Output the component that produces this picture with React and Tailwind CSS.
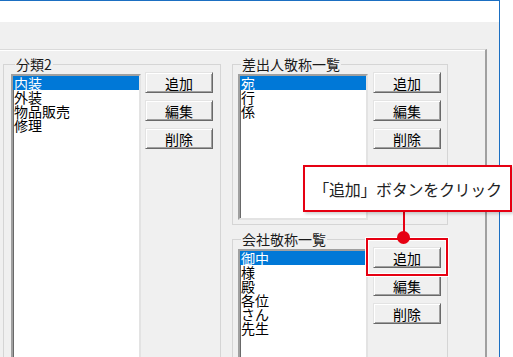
const font = { fontFamily: '"Noto Sans CJK JP", "Noto Sans", sans-serif' };

function Btn({ label }) {
  return (
    <div className="w-[68px] h-[21px] flex items-center justify-center bg-[#f0f0f0] border border-t-[#e3e3e3] border-l-[#e3e3e3] border-r-[#696969] border-b-[#696969] shadow-[inset_1px_1px_0_#fff,inset_-1px_-1px_0_#a0a0a0] text-[14px] leading-none text-black">
      {label}
    </div>
  );
}

function ListBox({ items, height }) {
  return (
    <div
      className={`mt-[2px] w-[130px] ${height} bg-white border-2 border-t-[#a0a0a0] border-l-[#a0a0a0] border-r-[#e3e3e3] border-b-[#e3e3e3] shadow-[inset_1px_1px_0_#696969] pt-[0px]`}
    >
      {items.map((t, i) => (
        <div
          key={t}
          className={`h-[14px] pl-[1px] text-[14px] leading-[14px] whitespace-nowrap ${
            i === 0 ? "bg-[#0078d7] text-white" : "text-black"
          }`}
        >
          {t}
        </div>
      ))}
    </div>
  );
}

function Group({ title, items, listH, width, pl, pr, gap, legendMl, extra }) {
  return (
    <fieldset className={`${width} border border-[#d5d5d5] ${pl} ${pr} pt-[1px] ${extra}`}>
      <legend className={`${legendMl} px-[1px] text-[14px] leading-[14px] text-[#1a1a1a]`}>{title}</legend>
      <div className={`flex items-start ${gap}`}>
        <ListBox items={items} height={listH} />
        <div className="flex flex-col gap-[7px]">
          <Btn label="追加" />
          <Btn label="編集" />
          <Btn label="削除" />
        </div>
      </div>
    </fieldset>
  );
}

export default function App() {
  return (
    <div className="relative w-[513px] h-[357px] bg-white overflow-hidden" style={font}>
      <div className="w-[500px] h-[400px] border-t border-r border-[#1b6fc2] flex flex-col">
        <div className="h-[22px] bg-white" />
        <div className="flex-1 bg-[#f0f0f0] pt-[27px]">
          <div className="w-[487px] h-full border-t border-t-[#dadada] border-r-2 border-r-[#a0a0a0] shadow-[inset_0_1px_0_#fff] pt-[7px] flex items-start">
            <Group
              title="分類2"
              items={["内装", "外装", "物品販売", "修理"]}
              listH="h-[300px]"
              width="w-[218px]"
              pl="pl-[7px]"
              pr="pr-[7px]"
              gap="gap-[4px]"
              legendMl="ml-[4px]"
              extra="ml-[3px]"
            />
            <div className="ml-[11px] flex flex-col">
              <Group
                title="差出人敬称一覧"
                items={["宛", "行", "係"]}
                listH="h-[146px]"
                width="w-[216px]"
                pl="pl-[5px]"
                pr="pr-[6px]"
                gap="gap-[5px]"
                legendMl="ml-[3px]"
                extra="pb-[4px]"
              />
              <Group
                title="会社敬称一覧"
                items={["御中", "様", "殿", "各位", "さん", "先生"]}
                listH="h-[150px]"
                width="w-[216px]"
                pl="pl-[5px]"
                pr="pr-[6px]"
                gap="gap-[5px]"
                legendMl="ml-[3px]"
                extra="mt-[7px]"
              />
            </div>
          </div>
        </div>
      </div>

      {/* highlight around the button */}
      <div className="absolute left-[366px] top-[238px] w-[82px] h-[38px] border-2 border-[#e60012] shadow-[0_0_0_1px_#fff,inset_0_0_0_1px_#fff]" />

      {/* callout */}
      <div className="absolute left-[403px] top-[211px] w-[2px] h-[26px] bg-[#e60012]" />
      <div className="absolute left-[397px] top-[231px] w-[13px] h-[13px] rounded-full bg-[#e60012]" />
      <div className="absolute left-[303px] top-[165px] w-[209px] h-[47px] bg-white border-2 border-[#e60012] shadow-[2px_2px_3px_rgba(0,0,0,0.18)] flex items-center justify-center">
        <span className="text-[16px] leading-none tracking-[-0.3px] text-[#222]">「追加」ボタンをクリック</span>
      </div>
    </div>
  );
}
